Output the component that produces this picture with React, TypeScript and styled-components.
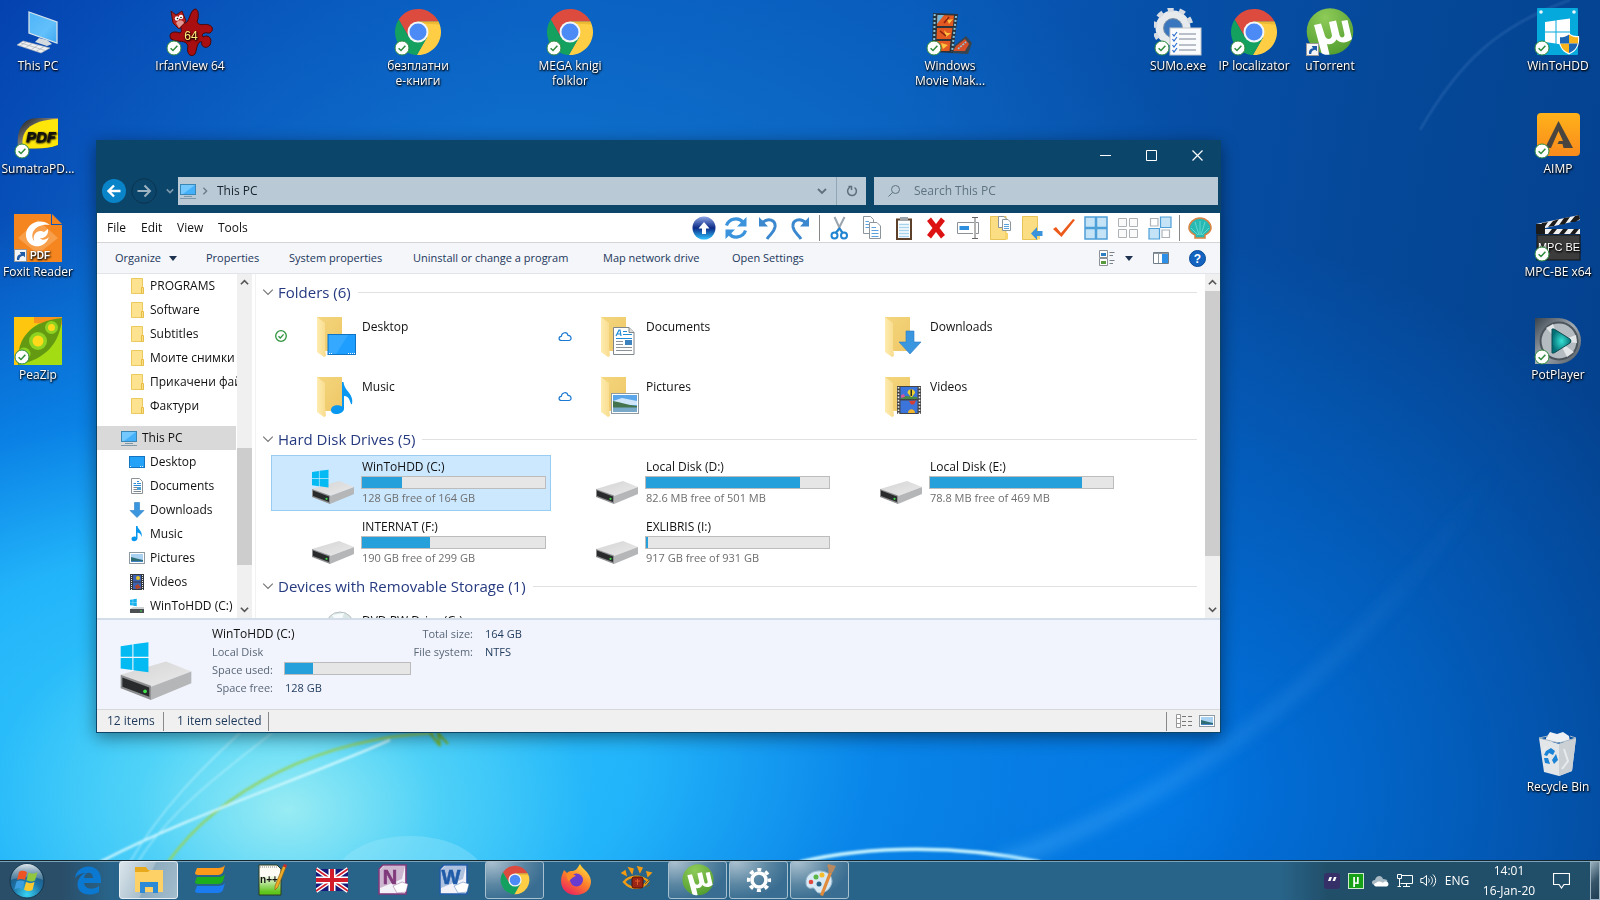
import React from "react";
import styled, { createGlobalStyle, css } from "styled-components";

const GlobalStyle = createGlobalStyle`
  *, *::before, *::after { box-sizing: border-box; }
  html, body { margin: 0; padding: 0; }
  body {
    font-family: "Segoe UI", "Open Sans", "Noto Sans", sans-serif;
    font-size: 12px;
    line-height: 16px;
    color: #111;
    overflow: hidden;
  }
  button, input { font: inherit; color: inherit; }
  button { border: 0; padding: 0; background: none; text-align: left; cursor: default; }
  a { color: inherit; text-decoration: none; }
  ul { list-style: none; margin: 0; padding: 0; }
  svg { display: block; flex: none; }
`;

/* ---------- Desktop ---------- */

const Desktop = styled.main`
  position: relative;
  display: flex;
  flex-direction: column;
  height: 100vh;
  min-height: 600px;
  overflow: hidden;
  background:
    radial-gradient(ellipse 300px 220px at 18% 90%, rgba(170, 242, 242, 0.85), rgba(110, 224, 245, 0.5) 50%, transparent 100%),
    radial-gradient(ellipse 1000px 560px at 16% 84%, #38ccfa 0%, #22b4fa 38%, rgba(10, 140, 240, 0.8) 62%, transparent 100%),
    radial-gradient(ellipse 700px 460px at 33% 34%, rgba(20, 130, 215, 0.8), transparent 100%),
    radial-gradient(ellipse 620px 560px at 72% 88%, rgba(0, 125, 240, 0.85), transparent 100%),
    linear-gradient(100deg, #0442b0 0%, #0757bd 30%, #0858b8 52%, #054899 80%, #04408c 100%);
`;

const Wallpaper = styled.svg`
  position: absolute;
  inset: 0;
  width: 100%;
  height: 100%;
`;

const IconGrid = styled.ul`
  position: relative;
  flex: 1;
  display: grid;
  grid-template-columns: repeat(21, 76px);
  grid-template-rows: repeat(8, 103px);
  padding-top: 8px;
`;

const IconCell = styled.li<{ $col: number; $row: number }>`
  grid-column: ${(p) => p.$col};
  grid-row: ${(p) => p.$row};
`;

const Shortcut = styled.button`
  display: flex;
  flex-direction: column;
  align-items: center;
  gap: 2px;
  width: 76px;
  text-align: center;
  line-height: 15px;
  color: #fff;
  white-space: pre;
  text-shadow: 0 1px 2px #000, 1px 1px 2px rgba(0, 0, 0, 0.9);
`;

const IconArt = styled.span`
  position: relative;
  width: 48px;
  height: 48px;
`;

const BadgeSlot = styled.span`
  position: absolute;
  left: 0;
  bottom: 0;
`;

/* ---------- Explorer window ---------- */

const Window = styled.section`
  position: absolute;
  left: 96px;
  right: 379px;
  top: 140px;
  bottom: 167px;
  display: flex;
  flex-direction: column;
  border: 1px solid #0c456a;
  border-top: 0;
  background: #fff;
  box-shadow: 0 4px 16px rgba(0, 0, 0, 0.45);
`;

const TitleArea = styled.header`
  display: flex;
  flex-direction: column;
  height: 73px;
  background: #0c456a;
`;

const Caption = styled.div`
  display: flex;
  justify-content: flex-end;
  height: 37px;
`;

const CaptionButton = styled.button`
  display: flex;
  align-items: center;
  justify-content: center;
  width: 46px;
  height: 30px;
`;

const NavRow = styled.div`
  display: flex;
  align-items: center;
  height: 28px;
  padding: 0 2px 0 4px;
`;

const Fields = styled.div`
  flex: 1;
  display: grid;
  grid-template-columns: 2fr 1fr;
  gap: 8px;
`;

const NavButton = styled.button<{ $w: number }>`
  display: flex;
  align-items: center;
  justify-content: center;
  width: ${(p) => p.$w}px;
  height: 28px;
`;

const AddressBar = styled.div`
  display: flex;
  align-items: center;
  height: 28px;
  padding-left: 2px;
  background: #b9cad6;
`;

const Crumb = styled.button`
  flex: 1;
  display: flex;
  align-items: center;
  gap: 5px;
  color: #16222c;
`;

const CrumbText = styled.span`
  padding-left: 3px;
`;

const RefreshButton = styled(NavButton)`
  border-left: 1px solid #8fa6b5;
`;

const SearchBox = styled.label`
  display: flex;
  align-items: center;
  gap: 14px;
  height: 28px;
  padding-left: 14px;
  background: #b9cad6;
`;

const SearchInput = styled.input`
  flex: 1;
  min-width: 0;
  border: 0;
  padding: 0;
  outline: 0;
  background: transparent;
  &::placeholder { color: #5f7280; opacity: 1; }
`;

const MenuBar = styled.nav`
  display: flex;
  align-items: center;
  height: 30px;
  padding: 0 8px 0 10px;
  border-bottom: 1px solid #d4d4d6;
`;

const MenuItem = styled.button<{ $w: number }>`
  width: ${(p) => p.$w}px;
`;

const IconStrip = styled.div`
  margin-left: auto;
  display: flex;
  align-items: center;
  gap: 8px;
`;

const StripSeparator = styled.span`
  width: 1px;
  height: 26px;
  margin-left: -1px;
  background: #888;
`;

const CommandBar = styled.div`
  display: flex;
  align-items: center;
  height: 31px;
  padding: 0 14px 0 18px;
  background: #f4f6f9;
  border-bottom: 1px solid #e2e4e7;
  color: #23375c;
  font-size: 11px;
`;

const Command = styled.button<{ $w: number }>`
  display: flex;
  align-items: center;
  gap: 8px;
  width: ${(p) => p.$w}px;
  white-space: nowrap;
`;

const ViewControls = styled.div`
  margin-left: auto;
  display: flex;
  align-items: center;
  gap: 20px;
`;

const ViewPicker = styled.button`
  display: flex;
  align-items: center;
  gap: 10px;
`;

const Panes = styled.div`
  flex: 1;
  display: flex;
  min-height: 0;
  overflow: hidden;
`;

const Sidebar = styled.nav`
  display: flex;
  width: 159px;
  border-right: 1px solid #f2f2f2;
`;

const Tree = styled.ul`
  width: 140px;
  overflow: hidden;
`;

const TreeItem = styled.li<{ $root?: boolean }>`
  ${(p) => p.$root && css`margin-top: 8px;`}
`;

const TreeLink = styled.a<{ $root?: boolean }>`
  display: flex;
  align-items: center;
  gap: 5px;
  height: 24px;
  padding-left: ${(p) => (p.$root ? 24 : 32)}px;
  width: ${(p) => (p.$root ? 139 : 140)}px;
  background: ${(p) => (p.$root ? "#d9d9d9" : "transparent")};
  white-space: nowrap;
`;

const Track = styled.div`
  display: flex;
  flex-direction: column;
  width: 15px;
  background: #f0f0f0;
`;

const TrackButton = styled.button`
  display: flex;
  align-items: center;
  justify-content: center;
  height: 17px;
`;

const TrackSpace = styled.div<{ $grow: number }>`
  flex: ${(p) => p.$grow};
`;

const Thumb = styled.div<{ $grow: number }>`
  flex: ${(p) => p.$grow};
  background: #cdcdcd;
`;

const Content = styled.div`
  flex: 1;
  min-width: 0;
  overflow: hidden;
  padding: 5px 8px 0 7px;
`;

const GroupTitle = styled.h2`
  display: flex;
  align-items: center;
  gap: 4px;
  height: 26px;
  margin: 0 0 3px -1px;
  font-size: 15px;
  font-weight: 400;
  line-height: 20px;
  color: #263a80;
  &::after { content: ""; flex: 1; height: 1px; margin-left: 3px; background: #dfe1e3; }
`;

const Tiles = styled.ul`
  display: grid;
  grid-template-columns: repeat(auto-fill, 280px);
  gap: 4px;
  margin: 0 0 2px 8px;
`;

const Tile = styled.button<{ $selected?: boolean }>`
  display: flex;
  align-items: center;
  width: 280px;
  height: 56px;
  border: 1px solid ${(p) => (p.$selected ? "#99ccf3" : "transparent")};
  background: ${(p) => (p.$selected ? "#cce8ff" : "transparent")};
`;

const SyncSlot = styled.span`
  display: flex;
  width: 37px;
  padding-left: 2px;
`;

const TileIcon = styled.span<{ $drive?: boolean }>`
  display: flex;
  justify-content: ${(p) => (p.$drive ? "center" : "flex-end")};
  width: 48px;
  padding-top: ${(p) => (p.$drive ? 8 : 2)}px;
  padding-right: ${(p) => (p.$drive ? 0 : 1)}px;
`;

const TileText = styled.span<{ $lift?: boolean }>`
  display: flex;
  flex-direction: column;
  align-items: stretch;
  width: 189px;
  padding-left: 5px;
  padding-bottom: ${(p) => (p.$lift ? 18 : 2)}px;
  line-height: 16px;
`;

const Muted = styled.span`
  color: #6e6e6e;
  font-size: 11px;
`;

const Meter = styled.span`
  display: flex;
  height: 13px;
  margin: 1px 0 1px -1px;
  border: 1px solid #bcbcbc;
  background: #e6e6e6;
`;

const MeterFill = styled.span`
  background: #26a0da;
`;

const Details = styled.footer`
  display: flex;
  height: 92px;
  padding: 5px 22px 0;
  background: #f1f4fc;
  border-top: 2px solid #d3ddea;
  border-bottom: 1px solid #d8d8d8;
  color: #1e395b;
  line-height: 18px;
`;

const DetailsArt = styled.div`
  display: flex;
  align-items: center;
  width: 93px;
  padding-top: 8px;
`;

const DetailsName = styled.div`
  color: #111;
`;

const DetailsKind = styled.div`
  color: #5a6779;
  font-size: 11px;
`;

const Facts = styled.dl`
  display: grid;
  grid-template-columns: 61px 126px;
  column-gap: 12px;
  margin: 0;
  font-size: 11px;
  color: #1e395b;
  dt { text-align: right; color: #5a6779; white-space: nowrap; }
  dd { margin: 0; }
`;

const WideFacts = styled(Facts)`
  grid-template-columns: 62px 80px;
  align-content: start;
`;

const StatusBar = styled.div`
  display: flex;
  align-items: center;
  height: 22px;
  padding: 0 5px 0 0;
  background: #f0f0f0;
  color: #1e395b;
`;

const StatusCell = styled.span<{ $w: number }>`
  width: ${(p) => p.$w}px;
  height: 19px;
  padding-left: 10px;
  line-height: 18px;
  border-right: 1px solid #8a8a8a;
  & + & { padding-left: 13px; }
`;

const StatusViews = styled.div`
  margin-left: auto;
  display: flex;
  align-items: center;
  gap: 7px;
  height: 19px;
  padding-left: 9px;
  border-left: 1px solid #8a8a8a;
`;

/* ---------- Taskbar ---------- */

const Taskbar = styled.footer`
  position: relative;
  display: flex;
  flex: none;
  height: 40px;
  border-top: 1px solid #16262f;
  box-shadow: inset 0 1px 0 #7ba3b9;
  background: linear-gradient(90deg, #2a4d68 0, #2a4d68 60px, #286489 110px, #286489 calc(100% - 320px), #214e68 calc(100% - 270px), #214e68 100%);
`;

const StartButton = styled.button`
  display: flex;
  align-items: center;
  justify-content: center;
  width: 54px;
  margin-right: 4px;
`;

const TaskList = styled.ul`
  display: flex;
  gap: 2px;
`;

const TaskButton = styled.button<{ $state?: "open" | "active" }>`
  display: flex;
  align-items: center;
  justify-content: center;
  width: 59px;
  height: 38px;
  border: 1px solid transparent;
  border-radius: 3px;
  ${(p) => p.$state === "open" && css`
    border-color: #a9c0cf;
    background: radial-gradient(ellipse at 10% 0%, #aac0cf 0, #5a86a2 45%, #396d91 75%);
  `}
  ${(p) => p.$state === "active" && css`
    border-color: #e8eff4;
    background: linear-gradient(115deg, #dbe5eb 0, #a9bfcd 48%, #8dacbf 50%, #a3bdcc 100%);
  `}
`;

const Tray = styled.div`
  margin-left: auto;
  display: flex;
  align-items: center;
  color: #fff;
`;

const TrayButton = styled.button<{ $w: number }>`
  display: flex;
  align-items: center;
  justify-content: center;
  width: ${(p) => p.$w}px;
  height: 38px;
`;

const Clock = styled.button`
  display: flex;
  flex-direction: column;
  justify-content: space-between;
  width: 70px;
  height: 36px;
  text-align: center;
`;

const NotificationsButton = styled(TrayButton)`
  margin-right: 12px;
`;

const ShowDesktop = styled.button`
  width: 10px;
  height: 39px;
  border: 1px solid #9db4c2;
  background: linear-gradient(135deg, #9ab0bd 0, #38566a 50%, #1e3d52 100%);
`;

/* ---------- Drawings ---------- */

const box = (s: number, h = s) => ({ width: s, height: h, "aria-hidden": true });

const OkBadge = () => (
  <svg {...box(16)} viewBox="0 0 16 16">
    <circle cx="8" cy="8" r="7" fill="#fff" stroke="#2e8b3d" strokeWidth="1" />
    <path d="M4.6 8.2 7 10.5 11.4 5.8" fill="none" stroke="#2e8b3d" strokeWidth="1.5" />
  </svg>
);

const LinkBadge = () => (
  <svg {...box(13)} viewBox="0 0 13 13">
    <rect x=".5" y=".5" width="12" height="12" fill="#f5f5f5" stroke="#999" />
    <path d="M3 11C2.500 7.500 4 5.500 7 5.200L5.800 3H11v5.200L9.200 6.800C6.500 7 5.500 8.500 5.200 11Z" fill="#1e5aa8" />
  </svg>
);

const Chrome = ({ s = 48 }: { s?: number }) => (
  <svg {...box(s)} viewBox="0 0 48 48">
    <path d="M4.680 11.530A23 23 0 0 1 44.460 13.500L24 13.500V24L14.910 29.250Z" fill="#dd4b3e" />
    <path d="M44.460 13.500A23 23 0 0 1 22.860 46.970L33.090 29.250 24 24V13.500Z" fill="#ffce44" />
    <path d="M22.860 46.970A23 23 0 0 1 4.680 11.530L14.910 29.250 24 24 33.090 29.250Z" fill="#14a05f" />
    <path d="M24 13.500H44.460L45 16.500 29 15.500Z" fill="#d9a522" opacity=".5" />
    <circle cx="24" cy="24" r="10.500" fill="#f4f6f8" />
    <circle cx="24" cy="24" r="8.500" fill="#4c8bf5" />
  </svg>
);

const UTorrent = ({ s = 48 }: { s?: number }) => (
  <svg {...box(s)} viewBox="0 0 48 48">
    <defs><radialGradient id="ut" cx=".4" cy=".2" r=".9"><stop offset="0" stopColor="#8ecb58" /><stop offset="1" stopColor="#4e9a2c" /></radialGradient></defs>
    <circle cx="24" cy="23.500" r="23.300" fill="url(#ut)" />
    <path d="M8 17 15 15.500 19 28C20.500 32 25.500 32 26 27.500L23 14 30 12.500 33.500 27C34.500 30.500 38.500 30 38.500 26.500L35.500 13 41.500 12 46 31C41 35.500 34 35.500 30.500 31.500 28.500 35.500 24.500 37 21 36L23.500 46.500C20 47.200 17 46.500 15.500 45Z" fill="#fff" />
  </svg>
);

const ThisPcBig = () => (
  <svg {...box(48)} viewBox="0 0 48 48">
    <defs><linearGradient id="scr" x1="0" y1="0" x2="1" y2="1"><stop offset="0" stopColor="#4fb4f7" /><stop offset=".6" stopColor="#62c0fb" /><stop offset="1" stopColor="#3ea8f2" /></linearGradient></defs>
    <path d="M15 4 43 14V35L15 25Z" fill="url(#scr)" stroke="#d6e2ea" strokeWidth="1.300" />
    <path d="M25 30 33 32 38 36 33 38 21 34Z" fill="#d5dade" />
    <path d="M9 33 36 40 27 45 3 37Z" fill="#eef0f1" stroke="#aeb5ba" strokeWidth=".6" />
    <path d="M7 35 31 42.500M12 34 6 38M18 35.500 11 40M24 37 17 42M30 38.500 22 43.500" stroke="#a9b0b5" strokeWidth=".7" />
  </svg>
);

const Irfan = () => (
  <svg {...box(48)} viewBox="0 0 48 48">
    <path d="M18 15C24 16 23 3 29 1 33 1 33 9 31 14 34 19 39 15 43 17 49 19 46 26 42 25 37 24 35 27 37 29 42 26 47 30 44 37 40 42 34 38 36 34 31 32 31 42 29 46 25 50 20 46 22 38 20 31 12 35 5 31 2 26 6 22 14 25 17 23 14 20 15 17 18 15Z" fill="#a90f10" stroke="#4c0606" />
    <path d="M5 3 10 7 16 3 20 13 13 21 7 15Z" fill="#b3221f" stroke="#5d0b0b" />
    <path d="M10 15C13 11 17 12 18 15L13 20Z" fill="#e49a94" />
    <circle cx="11" cy="10.500" r="2.200" fill="#fff" /><circle cx="15" cy="9" r="2.200" fill="#fff" />
    <circle cx="11.500" cy="10.500" r=".8" fill="#111" /><circle cx="15" cy="9.500" r=".8" fill="#111" />
    <text x="25" y="32" textAnchor="middle" fontFamily="Liberation Sans, sans-serif" fontSize="12" fill="#ffef7a">64</text>
  </svg>
);

const MovieMaker = () => (
  <svg {...box(48)} viewBox="0 0 48 48">
    <path d="M28 38 40 28 46 35 42 46 24 45Z" fill="#39454e" />
    <path d="M30 38 39 31 43 36 39 43 27 43Z" fill="#d5502a" />
    <path d="M32 41 41 33" stroke="#8ec5d8" strokeWidth="1.500" strokeDasharray="2 1" />
    <path d="M7 5 32 6 27 45 6 44Z" fill="#29333b" />
    <path d="M8.700 6 8 43M30 8 26 44" stroke="#86c2da" strokeWidth="2" strokeDasharray="2 2" />
    <path d="M11.500 7 28 7.500 27 18H11ZM11 20H26.500L25 31H10.500ZM10.500 33H24.500L23.500 43H10Z" fill="#e25a22" />
    <path d="M11.500 7H18L11 16Z" fill="#79b8d6" />
    <path d="M20 9 23 12 27 11 23 16ZM18 22 21 25 25 25 20 29ZM15 35 22 37 17 41Z" fill="#ffc33f" />
    <path d="M14 23 20 28M23 9 18 15" stroke="#8a1e0d" strokeWidth="1.500" />
  </svg>
);

const Sumo = () => (
  <svg {...box(48)} viewBox="0 0 48 48">
    <circle cx="19" cy="20" r="13.500" fill="none" stroke="#e6eaed" strokeWidth="8" />
    <circle cx="19" cy="20" r="18.500" fill="none" stroke="#d6dce1" strokeWidth="4.500" strokeDasharray="6 5.620" />
    <circle cx="19" cy="20" r="9.500" fill="#3a76bd" stroke="#8a9aa8" />
    <rect x="16" y="20" width="31" height="27" fill="#fafbfd" stroke="#c3c8ce" />
    <path d="M25 26H42M25 31H42M25 37H42M25 42H42" stroke="#7b8494" strokeWidth="1" />
    <path d="M18.500 26 20 28 23 24M18.500 31 20 33 23 29M18.500 37 20 39 23 35M18.500 42 20 44 23 40" fill="none" stroke="#2c6fd0" strokeWidth="1.200" />
  </svg>
);

const WinLogo = ({ x, y, k, c }: { x: number; y: number; k: number; c: string }) => (
  <g transform={`translate(${x} ${y}) scale(${k})`} fill={c}>
    <path d="M0 3 10.500 1.500V12.500H0ZM11.500 1.300 25 -.5V12.500H11.500ZM0 13.500H10.500V24.500L0 23ZM11.500 13.500H25V26.500L11.500 24.700Z" />
  </g>
);

const WinToHdd = () => (
  <svg {...box(48)} viewBox="0 0 48 48">
    <rect x="3" y="0" width="41" height="47" rx="1" fill="#05a9dc" />
    <circle cx="7" cy="4" r="1.800" fill="#e9f7fc" /><circle cx="40" cy="4" r="1.800" fill="#e9f7fc" />
    <WinLogo x={11} y={11} k={1} c="#fff" />
    <path d="M35 25C38 28 42 28 45 28 46 37 43 43 35 46.500 27 43 24 37 25 28 29 28 32 28 35 25Z" fill="#fff" />
    <path d="M35 26.500C37.500 28.500 40.500 29.300 44 29.300V35.500H35ZM35 35.500V45C30 43 27.300 40 26.400 35.500Z" fill="#f9b31b" />
    <path d="M35 26.500C32.500 28.500 29.500 29.300 26 29.300V35.500H35ZM35 35.500V45C40 43 42.700 40 43.600 35.500Z" fill="#1d66b5" />
  </svg>
);

const Sumatra = () => (
  <svg {...box(48)} viewBox="0 0 48 48">
    <defs><linearGradient id="sm" x1="0" y1="0" x2="1" y2="1"><stop offset="0" stopColor="#111" /><stop offset=".5" stopColor="#888" /><stop offset="1" stopColor="#111" /></linearGradient></defs>
    <path d="M4 37C2 20 8 7 24 7H44V34C34 38 18 38 4 37Z" fill="url(#sm)" />
    <path d="M9 37C6 22 14 9 44 8V34C34 38 22 38 9 37Z" fill="#ffe60a" />
    <text x="27" y="31" textAnchor="middle" fontFamily="Liberation Sans, sans-serif" fontWeight="700" fontStyle="italic" fontSize="15" fill="#111">PDF</text>
  </svg>
);

const Foxit = () => (
  <svg {...box(48)} viewBox="0 0 48 48">
    <path d="M0 0H37V11H48V48H0Z" fill="#f5861f" />
    <path d="M38 0 48 10H38Z" fill="#f5861f" />
    <path d="M24 6 44 24 24 40 4 24Z" fill="#f89f4c" />
    <path d="M36 11C26 3 11 10 12 22 13 34 30 37 35 23 32 26 28 27 26 24 31 25 35 20 34 15L30 18C25 15 18 19 20 27 15 19 22 9 36 11Z" fill="#fff" />
    <text x="26" y="45" textAnchor="middle" fontFamily="Liberation Sans, sans-serif" fontWeight="700" fontSize="10" fill="#fff">PDF</text>
  </svg>
);

const PeaZip = () => (
  <svg {...box(48)} viewBox="0 0 48 48">
    <rect width="48" height="48" fill="#a4dc14" />
    <path d="M0 0H40C10 10 6 24 4 48H0Z" fill="#ffc60f" />
    <path d="M20 0H48V8L20 6Z" fill="#f7941d" />
    <path d="M4 48C2 20 18 4 48 1 46 26 32 42 4 48Z" fill="#649a12" />
    <circle cx="24" cy="24" r="9" fill="#8ed321" /><circle cx="24" cy="24" r="5.500" fill="#ffd91a" />
    <circle cx="37.500" cy="10.500" r="6.500" fill="#8ed321" /><circle cx="37.500" cy="10.500" r="3.500" fill="#ffd91a" />
    <circle cx="10" cy="37" r="6.500" fill="#8ed321" />
  </svg>
);

const Aimp = () => (
  <svg {...box(48)} viewBox="0 0 48 48">
    <defs><linearGradient id="ai" x1="0" y1="0" x2="0" y2="1"><stop offset="0" stopColor="#ffb21a" /><stop offset="1" stopColor="#f98a1c" /></linearGradient></defs>
    <rect x="3" y="2" width="43" height="43" rx="4" fill="url(#ai)" />
    <path d="M24.500 10 39 37H29.500L28.500 33H23.500L25 30H29L24.500 20 17 37H11Z" fill="#484540" />
  </svg>
);

const Clapper = () => (
  <svg {...box(48)} viewBox="0 0 48 48">
    <path d="M2 10 45 1 46 6 3 16Z" fill="#f1f1f1" />
    <path d="M8 9 14 8 10 14 5 15ZM19 7 25 5 20 12 14 13ZM30 4 36 3 31 10 25 11ZM41 2 45 1 46 5 41 8 36 8Z" fill="#1b1b1b" />
    <path d="M2 15H46V20H2Z" fill="#f1f1f1" />
    <path d="M2 10H11V20H2ZM18 15H23L19 20H14ZM29 15H34L30 20H25ZM40 15H45L41 20H36Z" fill="#1b1b1b" />
    <rect x="3" y="21" width="43" height="25" fill="#3c3c3c" stroke="#151515" />
    <text x="25" y="37" textAnchor="middle" fontFamily="Liberation Sans, sans-serif" fontSize="11" fill="#fff">MPC BE</text>
  </svg>
);

const PotPlayer = () => (
  <svg {...box(48)} viewBox="0 0 48 48">
    <defs><linearGradient id="pp" x1="0" y1="0" x2="1" y2="1"><stop offset="0" stopColor="#39434d" /><stop offset=".5" stopColor="#a3abb3" /><stop offset="1" stopColor="#4a525b" /></linearGradient>
      <radialGradient id="pq"><stop offset="0" stopColor="#35e0d2" /><stop offset="1" stopColor="#056f76" /></radialGradient></defs>
    <path d="M1 1H24A23 23 0 0 1 24 47H1Z" fill="url(#pp)" />
    <circle cx="25" cy="24" r="18.500" fill="#b4bbc1" stroke="#4c545c" strokeWidth="2" />
    <path d="M25 24 12 11 19 7ZM25 24 40 35 33 40ZM25 24 42 18 43 26Z" fill="#e3e6e8" />
    <path d="M18 12 20 12 36 22Q38 24 36 26L20 36 18 36Z" fill="url(#pq)" stroke="#0b4d52" />
  </svg>
);

const RecycleBin = () => (
  <svg {...box(48)} viewBox="0 0 48 48">
    <path d="M12 9 16 3 23 5 29 3 35 7 36 13 12 13Z" fill="#eef1f3" />
    <path d="M5 9 25 15 42 9 38 42 25 47 10 43Z" fill="#e3e6e9" />
    <path d="M25 15 42 9 38 42 25 47Z" fill="#cbd0d5" />
    <path d="M5 9 14 7M42 9 36 7M5 9 25 14 42 9" fill="none" stroke="#a8b7c3" />
    <path d="M30 20 34 32 28 40M12 17 9 22" stroke="#e8ebed" fill="none" strokeWidth="2" />
    <path d="M12 22 17 19 21 22 19 26 15 24 13 27 10 26ZM22 25 24 31 20 35 18 31ZM10 29 14 29 16 35 11 34Z" fill="#1b83d6" />
  </svg>
);

const FolderSmall = () => (
  <svg {...box(16)} viewBox="0 0 16 16">
    <path d="M2.500.5H13.500V15.500H2.500Z" fill="#fde28f" stroke="#ecc95c" />
    <path d="M12.500 9.500H14.500V15.500H12.500Z" fill="#fbdf8b" stroke="#e6bd45" />
  </svg>
);

const PcSmall = () => (
  <svg {...box(16)} viewBox="0 0 16 16">
    <rect x=".5" y="1.500" width="15" height="10" fill="#45b0fa" stroke="#3a86b5" />
    <path d="M1 2H15L3 11H1Z" fill="#72c8ff" />
    <path d="M4 13.500H12M0 15.500H16" stroke="#7d98a9" />
  </svg>
);

const DesktopSmall = () => (
  <svg {...box(16)} viewBox="0 0 16 16">
    <rect x=".5" y="2.500" width="15" height="11" fill="#23a2f8" stroke="#1375c2" />
    <path d="M1 12.500H3M11 12.500H15" stroke="#d9f0ff" strokeDasharray="1 1" />
  </svg>
);

const DocSmall = () => (
  <svg {...box(16)} viewBox="0 0 16 16">
    <path d="M2.500.5H10.500L13.500 3.500V15.500H2.500Z" fill="#fff" stroke="#8c9196" />
    <path d="M4.500 5.500H7M8 3.500H10M8 5.500H12M4.500 7.500H12" stroke="#2a8ad4" />
    <path d="M4.500 9.500H12M4.500 11.500H12M4.500 13.500H12" stroke="#7d868e" />
    <path d="M8 9H12V12H8Z" fill="#4e9fd4" />
  </svg>
);

const DownSmall = () => (
  <svg {...box(16)} viewBox="0 0 16 16">
    <path d="M5.500.5H10.500V8.500H15L8 15.500 1 8.500H5.500Z" fill="#3b96e0" stroke="#2e7fc5" strokeWidth=".6" />
  </svg>
);

const MusicSmall = () => (
  <svg {...box(16)} viewBox="0 0 16 16">
    <path d="M7 0H8.500C9 4 14 5 12.500 11 12 8 10.500 7 8.500 6.500V12.500C8 16 2.500 16 2.500 13 2.500 10.500 5.500 10 7 11Z" fill="#0996ee" />
  </svg>
);

const PicSmall = () => (
  <svg {...box(16)} viewBox="0 0 16 16">
    <rect x=".5" y="2.500" width="15" height="11" fill="#fff" stroke="#8f9aa2" />
    <path d="M2 4H14V12H2Z" fill="#a9d2f2" />
    <path d="M2 7C6 8 9 9 14 10V12H2Z" fill="#2f6d74" /><path d="M2 11H14V12H2Z" fill="#4183c4" />
  </svg>
);

const VideoSmall = () => (
  <svg {...box(16)} viewBox="0 0 16 16">
    <path d="M1 0H15V16H1Z" fill="#35393d" />
    <path d="M4 1H12V7.500H4ZM4 8.500H12V15H4Z" fill="#3d62b4" />
    <path d="M2.500 1V16M13.500 1V16" stroke="#eee" strokeWidth="1" strokeDasharray="1 1" />
    <circle cx="9" cy="4" r="2" fill="#e6c52c" /><path d="M6 12 9 10 12 14 7 15Z" fill="#b0452c" />
  </svg>
);

const DriveSmall = () => (
  <svg {...box(16)} viewBox="0 0 16 16">
    <WinLogo x={1} y={1} k={0.27} c="#17b1ee" />
    <path d="M1 11 4 9H15V13H1Z" fill="#cfd2d4" /><path d="M1 11H15V15H1Z" fill="#4b4f52" /><path d="M11 13H13" stroke="#3fdf4f" />
  </svg>
);

const DriveArt = ({ s, win }: { s: number; win?: boolean }) => (
  <svg {...box(s, Math.round((s * 36) / 44))} viewBox="0 0 44 36">
    <defs><linearGradient id="dr" x1="0" y1="0" x2="1" y2="1"><stop offset="0" stopColor="#d4d4d5" /><stop offset="1" stopColor="#eaeaeb" /></linearGradient></defs>
    <path d="M1 20 28 12 43 18 19 27Z" fill="url(#dr)" />
    <path d="M19 27 43 18V25L19 35Z" fill="#b5b6b8" />
    <path d="M1 20 19 26.500V35L1 28Z" fill="#8c8d8f" />
    <path d="M2 21.500 18 27.500V33L2 27Z" fill="#292a2b" />
    <circle cx="15.500" cy="29.800" r="1.100" fill="#3ee04c" />
    {win && <WinLogo x={1} y={1} k={0.66} c="#03baf2" />}
  </svg>
);

type Kind = "desktop" | "doc" | "down" | "music" | "pic" | "video";

const FolderArt = ({ kind }: { kind: Kind }) => (
  <svg {...box(40)} viewBox="0 0 40 40">
    <defs><linearGradient id="fb" x1="0" y1="0" x2="1" y2="1"><stop offset="0" stopColor="#f4d67e" /><stop offset="1" stopColor="#eec766" /></linearGradient>
      <linearGradient id="ff" x1="0" y1="0" x2="1" y2="0"><stop offset="0" stopColor="#fdebb0" /><stop offset="1" stopColor="#f9dc8c" /></linearGradient></defs>
    <path d="M1 0H26V34H8Z" fill="url(#fb)" />
    <path d="M1 0 9 6V30L10 39 8 40 1 35Z" fill="url(#ff)" />
    {kind === "desktop" && <g><rect x="12" y="17.500" width="27.500" height="20" fill="#1e9fff" stroke="#0f74c4" /><path d="M13 18H32L20 37H13Z" fill="#45b1ff" opacity=".6" /><path d="M13 36.500H16M32 36.500H39" stroke="#fff" strokeDasharray="1 1" /></g>}
    {kind === "doc" && <g><path d="M13.500 10.500H29L34 15.500V37.500H13.500Z" fill="#fff" stroke="#7f868c" /><path d="M29 10.500V15.500H34" fill="#ddd" stroke="#7f868c" /><path d="M16 19 19 13H20L21 19M17 17H21M23 14.500H27M23 17.500H32M16 21.500H32" fill="none" stroke="#218bd8" strokeWidth="1.200" /><path d="M16 24.500H23M16 27.500H23M16 30.500H32M16 33.500H32" stroke="#8b9298" /><path d="M25 23H32V28H25Z" fill="#3b82bf" /></g>}
    {kind === "down" && <path d="M22 14H30V25H37L26 37 15 25H22Z" fill="#3b96e0" stroke="#2a7cc4" strokeWidth=".6" />}
    {kind === "music" && <path d="M26 5H27.500C28 14 38 16 36 27 34 29 35 19 28 19V32C27 38 15 39 15 33 15 28 22 27 26 29.500Z" fill="#0a97ef" />}
    {kind === "pic" && <g><rect x="11.500" y="16.500" width="27" height="20" fill="#fff" stroke="#909aa2" /><path d="M13 18H37V35H13Z" fill="#5ba6ea" /><path d="M13 24 22 21 37 24V28H13Z" fill="#cfe6fa" /><path d="M13 24C19 25 28 28 37 29V31H13Z" fill="#44744e" /><path d="M13 30.500H37V35H13Z" fill="#79a9c9" /></g>}
    {kind === "video" && <g><path d="M13 9H37V37H13Z" fill="#444" /><path d="M14.500 10V37M35.500 10V37" stroke="#eee" strokeWidth="1.600" strokeDasharray="1.600 1.600" /><path d="M16.500 10H33.500V22H16.500ZM16.500 23.500H33.500V36H16.500Z" fill="#3b75dc" /><path d="M17 20C19 17 22 20 25 19L33 20V22H17Z" fill="#4b8a46" /><path d="M17 18 20 17 21 20 17 21Z" fill="#d05aa0" /><path d="M23.500 16C23.500 11 31 11 31 16L28 20H27Z" fill="#f0d22a" /><path d="M26.500 12.500H28V19H26.500Z" fill="#2b2b2b" /><path d="M25 24 32 23.500 30 27.500H27Z" fill="#d33f35" /><path d="M24 36C24 31 31 31 31 36Z" fill="#f0b52a" /></g>}
  </svg>
);

const DiscArt = () => (
  <svg {...box(40)} viewBox="0 0 40 40">
    <circle cx="24" cy="15" r="14" fill="#dbe7e6" stroke="#b7bfc2" /><path d="M24 15 16 4 28 2Z" fill="#f7fbfb" />
    <circle cx="24" cy="15" r="4" fill="#fff" stroke="#b7bfc2" />
  </svg>
);

const SyncOk = () => (
  <svg {...box(14)} viewBox="0 0 14 14"><circle cx="7" cy="7" r="5.300" fill="none" stroke="#2f9440" strokeWidth="1.300" /><path d="M4.500 7.200 6.300 9 9.600 5.400" fill="none" stroke="#2f9440" strokeWidth="1.300" /></svg>
);
const SyncCloud = () => (
  <svg {...box(14)} viewBox="0 0 14 14"><path d="M3.500 11.500C.3 11.500.3 7.500 3.300 7.300 3.800 3 9 2.500 10 6.300 14 6.500 13.800 11.500 11 11.500Z" fill="none" stroke="#1b79d1" strokeWidth="1.200" /></svg>
);

const Chevron = ({ dir, c = "#555", s = 10, w = 1.8 }: { dir: "up" | "down" | "right"; c?: string; s?: number; w?: number }) => (
  <svg {...box(s)} viewBox="0 0 10 10">
    <path d={dir === "up" ? "M1 7 5 3 9 7" : dir === "down" ? "M1 3 5 7 9 3" : "M3 1 7 5 3 9"} fill="none" stroke={c} strokeWidth={w} />
  </svg>
);

const Caret = () => (
  <svg {...box(8, 5)} viewBox="0 0 8 5"><path d="M0 0H8L4 5Z" fill="#1e3250" /></svg>
);

/* Toolbar glyphs drawn on a 24px grid. */
const stripIcons: (React.ReactNode | "sep")[] = [
  <g><defs><linearGradient id="up" x1="0" y1="0" x2="0" y2="1"><stop offset="0" stopColor="#8fa6e6" /><stop offset=".5" stopColor="#0b2a86" /><stop offset="1" stopColor="#2fc4ff" /></linearGradient></defs><circle cx="12" cy="12" r="11.500" fill="url(#up)" /><path d="M12 6 17.500 12.500H14V18H10V12.500H6.500Z" fill="#fff" /></g>,
  <g fill="none" stroke="#3b93dc" strokeWidth="3.200"><path d="M2.500 9.500C5 2 15 1 19 6.500M21.500 14.500C19 22 9 23 5 17.500" /><path d="M22.500 1V10.500H13Z M1.500 23V13.500H11Z" fill="#3b93dc" stroke="none" /></g>,
  <g><path d="M6 7C12 1 20 4 19 11 18 17 14 18 11 23" fill="none" stroke="#3b88cf" strokeWidth="3" /><path d="M3 1V10.500H12Z" fill="#3b88cf" /></g>,
  <g><path d="M18 7C12 1 4 4 5 11 6 17 10 18 13 23" fill="none" stroke="#3b88cf" strokeWidth="3" /><path d="M21 1V10.500H12Z" fill="#3b88cf" /></g>,
  "sep",
  <g fill="none"><path d="M6.500 1 13.500 16M16.500 1 9 16" stroke="#9aa4ad" strokeWidth="2" /><circle cx="6.500" cy="19.500" r="3" stroke="#1f85d2" strokeWidth="2" /><circle cx="16" cy="19.500" r="3" stroke="#1f85d2" strokeWidth="2" /><path d="M7.500 17 11.500 12.500 15 17" stroke="#1f85d2" strokeWidth="2" /></g>,
  <g stroke="#8d959c" fill="#fff"><path d="M3.500.5H10.500L13.500 3.500V17.500H3.500Z" /><path d="M9.500 6.500H17L20.500 10V22.500H9.500Z" /><path d="M5.500 5.500H9M5.500 8.500H9M5.500 11.500H9M11.500 11.500H16M11.500 14.500H18.500M11.500 17.500H18.500M11.500 20.500H18.500" stroke="#5aa2dd" /></g>,
  <g><rect x="5" y="3.500" width="14" height="19.500" fill="#fff" stroke="#5d402a" strokeWidth="2" /><path d="M8 1H16V5H8Z" fill="#9ea4a8" /><path d="M7 8.500H17M7 11.500H17M7 14.500H17M7 17.500H17M7 20.500H17" stroke="#a8d3f0" strokeWidth="1.500" /></g>,
  <path d="M3 5 7 1.500 12 8 17 1.500 21 5 15.500 12 21 19 17 22.500 12 16 7 22.500 3 19 8.500 12Z" fill="#dd1313" />,
  <g fill="none" stroke="#8b9196"><path d="M18 6.500H1.500V17.500H17M20 6.500H22.500V17.500H20" /><path d="M16 1.500H22M19 1.500V22.500M16 22.500H22" stroke="#666" /><path d="M3.500 10H13V14H3.500Z" fill="#2d8fdd" stroke="none" /></g>,
  <g><path d="M2.500.5H18V23.500H2.500Z" fill="#fbdd84" stroke="#e8c357" /><path d="M17 17H20V23.500H17Z" fill="#f7d46c" /><g fill="#fff" stroke="#8d959c"><path d="M10.500.5H16L18 2.500V11.500H10.500Z" /><path d="M14.500 3.500H20L22.500 6V14.500H14.500Z" /></g><path d="M16 8.500H21M16 10.500H21M16 12.500H21" stroke="#5aa2dd" /></g>,
  <g><path d="M2.500.5H17.500V23.500H2.500Z" fill="#fbdd84" stroke="#e8c357" /><path d="M17 17H20V23.500H17Z" fill="#f7d46c" /><path d="M11 17.500 17 11V15H22.500V20H17V24Z" fill="#3b93dc" /></g>,
  <path d="M1 13 4 11 9 17 21 3 23 4 9.500 21Z" fill="#ec5a1c" />,
  <g fill="#c5e3f7" stroke="#4d9fd8" strokeWidth="1.500"><path d="M1 1H11.500V11.500H1ZM12.500 1H23V11.500H12.500ZM1 12.500H11.500V23H1ZM12.500 12.500H23V23H12.500Z" /></g>,
  <g fill="#fafafa" stroke="#aeb3b7"><path d="M2.500 2.500H10.500V10.500H2.500ZM13.500 2.500H21.500V10.500H13.500ZM2.500 13.500H10.500V21.500H2.500ZM13.500 13.500H21.500V21.500H13.500Z" /></g>,
  <g strokeWidth="1.200"><path d="M2.500 2.500H10V10H2.500ZM14 14H21.500V21.500H14Z" fill="#fff" stroke="#aeb3b7" /><path d="M12.500 1H23V11.500H12.500ZM1 12.500H11.500V23H1Z" fill="#c5e3f7" stroke="#4d9fd8" /></g>,
  "sep",
  <g><path d="M7 22V19C3 17 1 15 1 12 1 7 6 2 12 2 18 2 23 7 23 12 23 15 21 17 17 19V22Z" fill="#27b9b4" stroke="#d98545" strokeWidth="1.600" /><path d="M12 19V5M11 19 7 6M13 19 17 6M10 19 3 12M14 19 21 12" stroke="#7fe4da" strokeWidth=".7" /></g>,
];

const TaskExplorer = () => (
  <svg {...box(32)} viewBox="0 0 32 32"><path d="M2 3H13L15 6H30V28H2Z" fill="#e8a91c" /><path d="M2 8H15L17 6H30V28H2Z" fill="#fdd166" /><path d="M7 29V18H25V29H20V23H12V29Z" fill="#2d8ad6" /></svg>
);
const TaskEdge = () => (
  <svg {...box(32)} viewBox="0 0 32 32"><path d="M3 14C5-1 28-2 29 15V19H12C13 26 22 26 27 22V28C15 34 3 29 6 17 8 12 11 9 15 9 9 9 5 11 3 14ZM12 14H21C21 7 13 7 12 14Z" fill="#0b78d1" fillRule="evenodd" /></svg>
);
const TaskStripes = () => (
  <svg {...box(32)} viewBox="0 0 32 32">
    <path d="M3 4H24C27 4 30 3 31 1L29 8C28 10 26 11 24 11H4C2 11 1 10 1 9Z" fill="#fd9a1c" />
    <path d="M3 13H24C27 13 30 12 31 10L29 17C28 19 26 20 24 20H4C2 20 1 19 1 18Z" fill="#1cae1d" />
    <path d="M3 22H24C27 22 30 21 31 19L29 26C28 28 26 29 24 29H4C2 29 1 28 1 27Z" fill="#1a7cf0" />
  </svg>
);
const TaskNotepad = () => (
  <svg {...box(32)} viewBox="0 0 32 32"><defs><linearGradient id="np" x1="0" y1="0" x2="0" y2="1"><stop offset=".35" stopColor="#fdfdf6" /><stop offset=".9" stopColor="#5fc51b" /></linearGradient></defs><path d="M4 1H22L26 5V31H4Z" fill="url(#np)" stroke="#2b3a20" /><path d="M5 3H22" stroke="#888" strokeDasharray="1 1" /><text x="14" y="19" textAnchor="middle" fontFamily="Liberation Sans, sans-serif" fontSize="10" fontWeight="700" fill="#111">n++</text><path d="M20 22 28 2 31 3 23 23 20 26Z" fill="#edab28" stroke="#8a5a10" strokeWidth=".6" /><path d="M28 2 29 0 32 1 31 4Z" fill="#c92c2c" /></svg>
);
const TaskFlag = () => (
  <svg {...box(32)} viewBox="0 0 32 32"><path d="M0 5H32V27H0Z" fill="#171a7b" /><path d="M0 5 32 27M32 5 0 27" stroke="#fff" strokeWidth="4.500" /><path d="M0 5 32 27M32 5 0 27" stroke="#d21c2c" strokeWidth="1.600" /><path d="M16 5V27M0 16H32" stroke="#fff" strokeWidth="7" /><path d="M16 5V27M0 16H32" stroke="#d21c2c" strokeWidth="4" /></svg>
);
const TaskOffice = ({ letter, c }: { letter: string; c: string }) => (
  <svg {...box(32)} viewBox="0 0 32 32"><path d="M6 1H29V30H2V5Z" fill="#f2f2f8" stroke={c} strokeWidth="1.600" /><path d="M7 2H28L25 15 3 24V6Z" fill={c} opacity=".32" /><text x="13" y="20" textAnchor="middle" fontFamily="Liberation Sans, sans-serif" fontSize="20" fontWeight="700" fill={c} stroke={c} strokeWidth=".6">{letter}</text><path d="M16 22 25 18 31 20 29 28 20 29Z" fill="#fff" stroke={c} strokeWidth=".4" /></svg>
);
const TaskFirefox = () => (
  <svg {...box(32)} viewBox="0 0 32 32"><defs><linearGradient id="fx" x1=".8" y1="0" x2=".2" y2="1"><stop offset="0" stopColor="#ffe33d" /><stop offset=".5" stopColor="#ff7c2a" /><stop offset="1" stopColor="#ea1d63" /></linearGradient></defs><path d="M20 0C22 5 30 8 31 17 31 26 24 31 16 31 7 31 1 25 1 17 1 12 3 9 4 6L7 9C9 7 11 7 13 7 17 6 18 3 20 0Z" fill="url(#fx)" /><circle cx="16.500" cy="16" r="6.500" fill="#6a3bcf" /><path d="M6 10C10 8 12 9 16 12 12 13 11 16 8 17Z" fill="#ff8c27" /></svg>
);
const TaskXn = () => (
  <svg {...box(32)} viewBox="0 0 32 32"><path d="M3 18C9 11 20 11 27 17C21 26 10 26 3 18Z" fill="none" stroke="#f39b13" strokeWidth="2.400" /><rect x="11" y="13" width="11" height="11" rx="2" fill="#9c2615" stroke="#511008" /><path d="M14 17H19M16.500 15V21" stroke="#e05a2a" /><path d="M1 9 4 7 5 11ZM8 4 12 5 11 9ZM17 3 21 4 19 8ZM26 8 30 9 27 12Z" fill="#f39b13" stroke="#f39b13" strokeWidth="1.500" /><path d="M24 20 29 15M25 23 29 21" stroke="#6b5a2a" /></svg>
);
const TaskGear = () => (
  <svg {...box(26)} viewBox="0 0 26 26"><circle cx="13" cy="13" r="7" fill="none" stroke="#fff" strokeWidth="3.600" /><circle cx="13" cy="13" r="10.400" fill="none" stroke="#fff" strokeWidth="3.400" strokeDasharray="4 4.168" strokeDashoffset="2" /></svg>
);
const TaskPaint = () => (
  <svg {...box(32)} viewBox="0 0 32 32"><path d="M2 19C1 11 9 6 17 7 25 8 28 12 28 18 27 24 23 28 17 29 11 30 12 23 8 24 5 25 2 23 2 19Z" fill="#d6e9f5" stroke="#93b4ca" /><circle cx="7" cy="18" r="2.300" fill="#e2493e" /><circle cx="12" cy="13" r="2.500" fill="#5bb648" /><circle cx="18" cy="11" r="2.500" fill="#f5bd2d" /><circle cx="15" cy="20" r="2.500" fill="#286489" /><path d="M16 31 25 8 28 9 19 32Z" fill="#e08c3c" /><path d="M24 8C26 5 22 3 24 0L32 2C30 5 30 7 28 9Z" fill="#b98a60" /></svg>
);
const StartOrb = () => (
  <svg {...box(36)} viewBox="0 0 36 36">
    <defs><radialGradient id="orb" cx=".5" cy=".9" r=".9"><stop offset="0" stopColor="#38d4f4" /><stop offset=".5" stopColor="#1d6fa3" /><stop offset="1" stopColor="#1e4866" /></radialGradient><linearGradient id="orh" x1="0" y1="0" x2="0" y2="1"><stop offset="0" stopColor="#dfe9ef" /><stop offset="1" stopColor="#6e93ab" stopOpacity=".5" /></linearGradient></defs>
    <circle cx="18" cy="18" r="17" fill="url(#orb)" stroke="#16364b" />
    <path d="M2 17A16 16 0 0 1 34 17C26 13 12 13 2 17Z" fill="url(#orh)" />
    <path d="M10 9C13 7 15 8 18 9L16 17C13 15.500 11 15.500 8 17Z" fill="#ee5423" />
    <path d="M19.500 9.500C22 11 25 11 28.500 9L26 17.500C23 19 20 18.500 17.500 17.300Z" fill="#91c63f" />
    <path d="M7.500 18.500C10 17 13 17 15.500 18.500L13.500 26C11 25 8.500 25 5.500 26.500Z" fill="#3c9de0" />
    <path d="M17 19C20 20.500 23 20.500 25.500 19L23.500 27C20.500 28.500 18 28 15 26.700Z" fill="#fdc82e" />
  </svg>
);

/* ---------- Data ---------- */

type Badge = "ok" | "link";
const shortcuts: { col: number; row: number; label: string; art: React.ReactNode; badge?: Badge }[] = [
  { col: 1, row: 1, label: "This PC", art: <ThisPcBig /> },
  { col: 3, row: 1, label: "IrfanView 64", art: <Irfan />, badge: "ok" },
  { col: 6, row: 1, label: "безплатни\nе-книги", art: <Chrome />, badge: "ok" },
  { col: 8, row: 1, label: "MEGA knigi\nfolklor", art: <Chrome />, badge: "ok" },
  { col: 13, row: 1, label: "Windows\nMovie Mak...", art: <MovieMaker />, badge: "ok" },
  { col: 16, row: 1, label: "SUMo.exe", art: <Sumo />, badge: "ok" },
  { col: 17, row: 1, label: "IP localizator", art: <Chrome />, badge: "ok" },
  { col: 18, row: 1, label: "uTorrent", art: <UTorrent />, badge: "link" },
  { col: 21, row: 1, label: "WinToHDD", art: <WinToHdd />, badge: "ok" },
  { col: 1, row: 2, label: "SumatraPD...", art: <Sumatra />, badge: "ok" },
  { col: 21, row: 2, label: "AIMP", art: <Aimp />, badge: "ok" },
  { col: 1, row: 3, label: "Foxit Reader", art: <Foxit />, badge: "link" },
  { col: 21, row: 3, label: "MPC-BE x64", art: <Clapper />, badge: "ok" },
  { col: 1, row: 4, label: "PeaZip", art: <PeaZip />, badge: "ok" },
  { col: 21, row: 4, label: "PotPlayer", art: <PotPlayer />, badge: "ok" },
  { col: 21, row: 8, label: "Recycle Bin", art: <RecycleBin /> },
];

const tree: { label: string; icon: React.ReactNode; root?: boolean }[] = [
  ...["PROGRAMS", "Software", "Subtitles", "Моите снимки", "Прикачени фай", "Фактури"].map((label) => ({ label, icon: <FolderSmall /> })),
  { label: "This PC", icon: <PcSmall />, root: true },
  { label: "Desktop", icon: <DesktopSmall /> },
  { label: "Documents", icon: <DocSmall /> },
  { label: "Downloads", icon: <DownSmall /> },
  { label: "Music", icon: <MusicSmall /> },
  { label: "Pictures", icon: <PicSmall /> },
  { label: "Videos", icon: <VideoSmall /> },
  { label: "WinToHDD (C:)", icon: <DriveSmall /> },
];

const folders: { label: string; kind: Kind; sync?: "ok" | "cloud" }[] = [
  { label: "Desktop", kind: "desktop", sync: "ok" },
  { label: "Documents", kind: "doc", sync: "cloud" },
  { label: "Downloads", kind: "down" },
  { label: "Music", kind: "music" },
  { label: "Pictures", kind: "pic", sync: "cloud" },
  { label: "Videos", kind: "video" },
];

const drives = [
  { label: "WinToHDD (C:)", used: 22, free: "128 GB free of 164 GB", win: true },
  { label: "Local Disk (D:)", used: 84, free: "82.6 MB free of 501 MB" },
  { label: "Local Disk (E:)", used: 83, free: "78.8 MB free of 469 MB" },
  { label: "INTERNAT (F:)", used: 37, free: "190 GB free of 299 GB" },
  { label: "EXLIBRIS (I:)", used: 1, free: "917 GB free of 931 GB" },
];

const commands: [string, number][] = [
  ["Organize", 91], ["Properties", 83], ["System properties", 124],
  ["Uninstall or change a program", 190], ["Map network drive", 129], ["Open Settings", 90],
];

const tasks: { name: string; art: React.ReactNode; state?: "open" | "active" }[] = [
  { name: "Edge", art: <TaskEdge /> },
  { name: "File Explorer", art: <TaskExplorer />, state: "active" },
  { name: "Layers", art: <TaskStripes /> },
  { name: "Notepad++", art: <TaskNotepad /> },
  { name: "English", art: <TaskFlag /> },
  { name: "OneNote", art: <TaskOffice letter="N" c="#80397b" /> },
  { name: "Word", art: <TaskOffice letter="W" c="#1f5ba8" /> },
  { name: "Chrome", art: <Chrome s={30} />, state: "open" },
  { name: "Firefox", art: <TaskFirefox /> },
  { name: "XnView", art: <TaskXn /> },
  { name: "uTorrent", art: <UTorrent s={32} />, state: "open" },
  { name: "Settings", art: <TaskGear />, state: "open" },
  { name: "Paint", art: <TaskPaint />, state: "open" },
];

/* ---------- Parts ---------- */

const ScrollTrack = ({ before, thumb, after }: { before: number; thumb: number; after: number }) => (
  <Track>
    <TrackButton aria-label="Scroll up"><Chevron dir="up" s={9} /></TrackButton>
    <TrackSpace $grow={before} />
    <Thumb $grow={thumb} />
    <TrackSpace $grow={after} />
    <TrackButton aria-label="Scroll down"><Chevron dir="down" s={9} /></TrackButton>
  </Track>
);

const UsageMeter = ({ used }: { used: number }) => (
  <Meter><MeterFill style={{ width: `${used}%` }} /></Meter>
);

const Group = ({ title, children }: { title: string; children: React.ReactNode }) => (
  <section>
    <GroupTitle><Chevron dir="down" s={12} c="#777" w={1} />{title}</GroupTitle>
    <Tiles>{children}</Tiles>
  </section>
);

const ExplorerWindow = () => (
  <Window aria-label="This PC">
    <TitleArea>
      <Caption>
        <CaptionButton aria-label="Minimize"><svg {...box(11)} viewBox="0 0 11 11"><path d="M0 5.500H11" stroke="#fff" /></svg></CaptionButton>
        <CaptionButton aria-label="Maximize"><svg {...box(11)} viewBox="0 0 11 11"><path d="M.5.5H10.500V10.500H.5Z" fill="none" stroke="#fff" /></svg></CaptionButton>
        <CaptionButton aria-label="Close"><svg {...box(11)} viewBox="0 0 11 11"><path d="M.5.5 10.500 10.500M10.500.5.5 10.500" stroke="#fff" strokeWidth="1.200" /></svg></CaptionButton>
      </Caption>
      <NavRow>
        <NavButton $w={26} aria-label="Back"><svg {...box(24)} viewBox="0 0 24 24"><circle cx="12" cy="12" r="12" fill="#0a84c9" /><path d="M18.500 12H7M12 6.500 6.500 12 12 17.500" fill="none" stroke="#fff" strokeWidth="2.400" /></svg></NavButton>
        <NavButton $w={34} aria-label="Forward"><svg {...box(26)} viewBox="0 0 26 26"><circle cx="13" cy="13" r="12.300" fill="none" stroke="#0a3450" /><path d="M6.500 13H18M13.500 7.500 19 13 13.500 18.500" fill="none" stroke="#9fb4c2" strokeWidth="2" /></svg></NavButton>
        <NavButton $w={17} aria-label="Recent locations"><Chevron dir="down" c="#7f9bad" s={8} w={2} /></NavButton>
        <Fields>
          <AddressBar>
            <Crumb><PcSmall /><Chevron dir="right" c="#6d7d89" s={8} /><CrumbText>This PC</CrumbText></Crumb>
            <NavButton $w={28} aria-label="Previous locations"><Chevron dir="down" c="#60717d" s={10} /></NavButton>
            <RefreshButton $w={30} aria-label="Refresh"><svg {...box(12)} viewBox="0 0 12 12"><path d="M4 2.200A4.400 4.400 0 1 0 8.500 2.500M2.500 1.500H6M5.500 1V5" fill="none" stroke="#5e6f7b" strokeWidth="1.500" /></svg></RefreshButton>
          </AddressBar>
          <SearchBox>
            <svg {...box(12)} viewBox="0 0 12 12"><circle cx="7.500" cy="4.500" r="4" fill="none" stroke="#5f7280" /><path d="M4.500 7.500.5 11.500" stroke="#5f7280" /></svg>
            <SearchInput aria-label="Search This PC" placeholder="Search This PC" />
          </SearchBox>
        </Fields>
      </NavRow>
    </TitleArea>
    <MenuBar>
      <MenuItem $w={34}>File</MenuItem><MenuItem $w={36}>Edit</MenuItem><MenuItem $w={41}>View</MenuItem><MenuItem $w={40}>Tools</MenuItem>
      <IconStrip>
        {stripIcons.map((icon, i) => icon === "sep"
          ? <StripSeparator key={i} />
          : <button key={i} aria-label={`Tool ${i + 1}`}><svg {...box(24)} viewBox="0 0 24 24">{icon}</svg></button>)}
      </IconStrip>
    </MenuBar>
    <CommandBar>
      {commands.map(([label, w], i) => <Command key={label} $w={w}>{label}{i === 0 && <Caret />}</Command>)}
      <ViewControls>
        <ViewPicker aria-label="Change view">
          <svg {...box(16)} viewBox="0 0 16 16"><path d="M.5.5H8.500V7.500H.5ZM.5 8.500H8.500V15.500H.5Z" fill="#fff" stroke="#8a9096" /><path d="M2 3H7V6H2Z" fill="#2c7fc2" /><path d="M2 11H7V14H2Z" fill="#5a9a3e" /><path d="M10.500 2.500H15.500M10.500 5.500H14M10.500 10.500H15.500M10.500 13.500H14" stroke="#7b828a" /></svg>
          <Caret />
        </ViewPicker>
        <button aria-label="Preview pane"><svg {...box(16)} viewBox="0 0 16 16"><path d="M.5 2.500H15.500V13.500H.5Z" fill="#fff" stroke="#6f7d88" /><path d="M1 3.500H15" stroke="#8b98a2" /><path d="M9 4H15V13H9Z" fill="#2c90e8" /><path d="M5.500 4V13" stroke="#8b98a2" /></svg></button>
        <button aria-label="Help"><svg {...box(17)} viewBox="0 0 17 17"><circle cx="8.500" cy="8.500" r="8" fill="#1264c0" stroke="#0b4b97" /><text x="8.500" y="13" textAnchor="middle" fontFamily="Liberation Sans, sans-serif" fontWeight="700" fontSize="12" fill="#fff">?</text></svg></button>
      </ViewControls>
    </CommandBar>
    <Panes>
      <Sidebar>
        <Tree>
          {tree.map((t) => <TreeItem key={t.label} $root={t.root}><TreeLink href="#" $root={t.root}>{t.icon}{t.label}</TreeLink></TreeItem>)}
        </Tree>
        <ScrollTrack before={157} thumb={117} after={36} />
      </Sidebar>
      <Content>
        <Group title="Folders (6)">
          {folders.map((f) => (
            <li key={f.label}><Tile>
              <SyncSlot>{f.sync === "ok" && <SyncOk />}{f.sync === "cloud" && <SyncCloud />}</SyncSlot>
              <TileIcon><FolderArt kind={f.kind} /></TileIcon>
              <TileText $lift>{f.label}</TileText>
            </Tile></li>
          ))}
        </Group>
        <Group title="Hard Disk Drives (5)">
          {drives.map((d) => (
            <li key={d.label}><Tile $selected={d.win}>
              <SyncSlot />
              <TileIcon $drive><DriveArt s={44} win={d.win} /></TileIcon>
              <TileText><span>{d.label}</span><UsageMeter used={d.used} /><Muted>{d.free}</Muted></TileText>
            </Tile></li>
          ))}
        </Group>
        <Group title="Devices with Removable Storage (1)">
          <li><Tile><SyncSlot /><TileIcon><DiscArt /></TileIcon><TileText $lift>DVD RW Drive (G:)</TileText></Tile></li>
        </Group>
      </Content>
      <ScrollTrack before={0} thumb={265} after={45} />
    </Panes>
    <Details>
      <DetailsArt><DriveArt s={74} win /></DetailsArt>
      <div>
        <DetailsName>WinToHDD (C:)</DetailsName>
        <DetailsKind>Local Disk</DetailsKind>
        <Facts>
          <dt>Space used:</dt><dd><UsageMeter used={22} /></dd>
          <dt>Space free:</dt><dd>128 GB</dd>
        </Facts>
      </div>
      <WideFacts>
        <dt>Total size:</dt><dd>164 GB</dd>
        <dt>File system:</dt><dd>NTFS</dd>
      </WideFacts>
    </Details>
    <StatusBar>
      <StatusCell $w={67}>12 items</StatusCell>
      <StatusCell $w={105}>1 item selected</StatusCell>
      <StatusViews>
        <button aria-label="Details view"><svg {...box(16)} viewBox="0 0 16 16"><path d="M.5 1.500H4.500V14.500H.5ZM.5 5.500H4.500M.5 10.500H4.500" fill="#fff" stroke="#999" /><path d="M6 3.500H16M6 8.500H16M6 12.500H16" stroke="#777" strokeDasharray="4 2" /></svg></button>
        <button aria-label="Large icons"><PicSmall /></button>
      </StatusViews>
    </StatusBar>
  </Window>
);

export default function App() {
  return (
    <>
      <GlobalStyle />
      <Desktop>
        <Wallpaper viewBox="0 0 1600 900" preserveAspectRatio="none" aria-hidden>
          <defs>
            <filter id="soft"><feGaussianBlur stdDeviation="1" /></filter>
            <filter id="glow" x="-20%" y="-20%" width="140%" height="140%"><feGaussianBlur stdDeviation="7" /></filter>
            <linearGradient id="ray" x1="0" y1="1" x2="1" y2="0"><stop offset="0" stopColor="#4fb5ff" stopOpacity=".4" /><stop offset=".8" stopColor="#5aa8ee" stopOpacity=".05" /><stop offset="1" stopColor="#5aa8ee" stopOpacity="0" /></linearGradient>
          </defs>
          <ellipse cx="410" cy="880" rx="76" ry="44" fill="#a8ecfb" opacity=".3" />
          <g fill="none" filter="url(#soft)">
            <path d="M168 862C220 790 320 738 434 733" stroke="#8fd468" strokeWidth="2.500" />
            <path d="M430 733 440 746 438 733 448 744" stroke="#6fb63c" strokeWidth="2.500" />
            <path d="M100 862C190 815 300 780 390 740" stroke="#d8faff" strokeWidth="2" />
            <path d="M130 862C160 810 200 770 240 733M138 862C170 810 225 770 272 733" stroke="#bdf2ff" strokeWidth="1.200" opacity=".8" />
            <path d="M800 862C870 845 960 845 1040 862" stroke="#c9f5ff" strokeWidth="3.500" />
            <path d="M1420 130C1460 60 1500 25 1570 0" stroke="#6fa5dc" strokeWidth="2" opacity=".25" />
          </g>
          <path d="M1000 862C1150 810 1340 700 1500 460" fill="none" stroke="url(#ray)" strokeWidth="14" filter="url(#glow)" />
        </Wallpaper>
        <IconGrid>
          {shortcuts.map((s) => (
            <IconCell key={s.label} $col={s.col} $row={s.row}>
              <Shortcut>
                <IconArt>{s.art}{s.badge && <BadgeSlot>{s.badge === "ok" ? <OkBadge /> : <LinkBadge />}</BadgeSlot>}</IconArt>
                <span>{s.label}</span>
              </Shortcut>
            </IconCell>
          ))}
        </IconGrid>
        <ExplorerWindow />
        <Taskbar>
          <StartButton aria-label="Start"><StartOrb /></StartButton>
          <TaskList>
            {tasks.map((t) => <li key={t.name}><TaskButton $state={t.state} aria-label={t.name}>{t.art}</TaskButton></li>)}
          </TaskList>
          <Tray>
            <TrayButton $w={24} aria-label="Quotes"><svg {...box(16)} viewBox="0 0 16 16"><rect width="16" height="16" rx="3" fill="#363068" /><path d="M4 8 5.500 4H8L6.500 8ZM8.500 8 10 4H12.500L11 8Z" fill="#fff" /></svg></TrayButton>
            <TrayButton $w={24} aria-label="uTorrent"><svg {...box(16)} viewBox="0 0 16 16"><rect x=".5" y=".5" width="15" height="15" fill="#16a016" stroke="#cfe9cf" /><text x="8" y="11" textAnchor="middle" fontFamily="Liberation Sans, sans-serif" fontWeight="700" fontSize="12" fill="#fff">µ</text></svg></TrayButton>
            <TrayButton $w={24} aria-label="OneDrive"><svg {...box(18)} viewBox="0 0 18 18"><path d="M4 13C0 13 0 8 4 8 5 3 11 3 12 7 17 7 18 10 14 11Z" fill="#a9bac5" /><path d="M5 14.500C3 14.500 2 11.500 5 11 8 8 11 10 12 11 13 9 17 9 17.500 12 17.500 14 16 14.500 15 14.500Z" fill="#fff" /></svg></TrayButton>
            <TrayButton $w={24} aria-label="Network"><svg {...box(17)} viewBox="0 0 17 17"><path d="M6 3.500H16.500V11.500H4.500M10.500 11.500V14.500M7 14.500H14M1.500 2.500H5.500V6.500H1.500ZM3.500 6.500V15M1.500 14.500H5" fill="none" stroke="#fff" /></svg></TrayButton>
            <TrayButton $w={24} aria-label="Volume"><svg {...box(17)} viewBox="0 0 17 17"><path d="M.8 6.500H3L6.500 3.500V13.500L3 10.500H.8ZM8.500 6.500C9.500 7.700 9.500 9.300 8.500 10.500M10.700 4.500C13 6.800 13 10.200 10.700 12.500M13 2.500C16.500 6 16.500 11 13 14.500" fill="none" stroke="#fff" /></svg></TrayButton>
            <TrayButton $w={34}>ENG</TrayButton>
            <Clock><span>14:01</span><span>16-Jan-20</span></Clock>
            <NotificationsButton $w={34} aria-label="Notifications"><svg {...box(17)} viewBox="0 0 17 17"><path d="M.5 1.500H16.500V12.500H11L8.500 16 6 12.500H.5Z" fill="none" stroke="#fff" strokeWidth="1.200" /></svg></NotificationsButton>
            <ShowDesktop aria-label="Show desktop" />
          </Tray>
        </Taskbar>
      </Desktop>
    </>
  );
}
